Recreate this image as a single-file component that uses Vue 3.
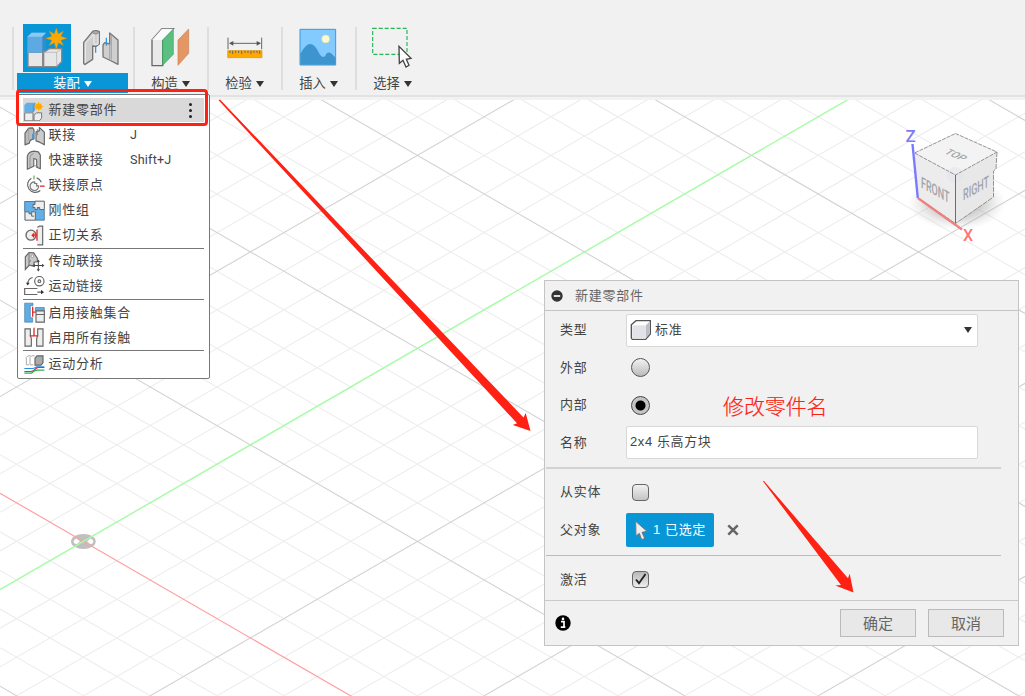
<script setup>
const minor = []
for (let n = -26; n <= 26; n++) minor.push({ n, d: n * 38.6, major: n % 5 === 0 })

const OX = 83.4
const OY = 541.4
const S = 0.5778
const yAt = (x, d, dir) => OY + d + dir * S * (x - OX)

const groups = [
  [
    { icon: 'new', box: '42 28.5 63 63', label: '新建零部件', active: true },
    { icon: 'joint', box: '42 103.5 63 63', label: '联接', key: 'J' },
    { icon: 'quick', box: '42 178.5 63 63', label: '快速联接', key: 'Shift+J' },
    { icon: 'origin', box: '42 253.5 63 63', label: '联接原点' },
    { icon: 'rigid', box: '42 328.5 63 63', label: '刚性组' },
    { icon: 'tangent', box: '42 403.5 63 63', label: '正切关系' },
  ],
  [
    { icon: 'drive', box: '42 48.5 63 63', label: '传动联接' },
    { icon: 'link', box: '42 122.5 63 63', label: '运动链接' },
  ],
  [
    { icon: 'contact', box: '42 201.5 63 63', label: '启用接触集合' },
    { icon: 'allcontact', box: '42 275.5 63 63', label: '启用所有接触' },
  ],
  [{ icon: 'study', box: '42 355.5 63 63', label: '运动分析' }],
]
</script>

<template>
  <div class="app">
    <svg class="canvas" width="1025" height="696" viewBox="0 0 1025 696">
      <defs>
        <radialGradient id="shade">
          <stop offset="0" stop-color="#777" stop-opacity=".75" />
          <stop offset=".6" stop-color="#999" stop-opacity=".35" />
          <stop offset="1" stop-color="#bbb" stop-opacity="0" />
        </radialGradient>
      </defs>
      <g fill="none">
        <template v-for="l in minor" :key="l.n">
          <path v-if="!l.major" :d="`M0 ${yAt(0, l.d, 1)}L1025 ${yAt(1025, l.d, 1)}M0 ${yAt(0, l.d, -1)}L1025 ${yAt(1025, l.d, -1)}`" stroke="#ededed" stroke-width="1.100" />
        </template>
        <template v-for="l in minor" :key="'m' + l.n">
          <path v-if="l.major && l.n !== 0" :d="`M0 ${yAt(0, l.d, 1)}L1025 ${yAt(1025, l.d, 1)}M0 ${yAt(0, l.d, -1)}L1025 ${yAt(1025, l.d, -1)}`" stroke="#d2d2d2" stroke-width="1.100" />
        </template>
        <ellipse cx="83.4" cy="541.4" rx="12.3" ry="7.5" fill="#bfbfbf" />
        <path d="M80 541.4L76.5 538.5Q73.5 539.5 73.5 541.4T76.5 544.3ZM87 541.4L90.500 538.500Q93.400 539.500 93.400 541.400T90.500 544.300Z" fill="#fff" />
        <path :d="`M0 ${yAt(0, 0, 1)}L1025 ${yAt(1025, 0, 1)}`" stroke="#ffa0a0" stroke-width="1.2" />
        <path :d="`M0 ${yAt(0, 0, -1)}L1025 ${yAt(1025, 0, -1)}`" stroke="#a6fba6" stroke-width="1.4" />
      </g>
      <g class="cube-text">
        <ellipse cx="957" cy="203" rx="49" ry="27" fill="url(#shade)" />
        <path d="M955.500 133.500L997 152L955.500 175L914.500 153Z" fill="#f3f3f4" />
        <path d="M914.500 153L955.500 175V223.500L918 198Z" fill="#ececed" />
        <path d="M997 152L955.500 175V223.500L993 197V171L996 169Z" fill="#e8e8e9" />
        <circle cx="955" cy="175" r="8" fill="#dfe3e9" opacity=".5" />
        <g fill="none" stroke="#888" stroke-width=".9">
          <path d="M955.500 133.500L997 152L955.500 175L914.500 153Z" stroke-dasharray="4 1" />
          <path d="M997 152L996 169L993.500 171V197L955.500 223.500V175" stroke-dasharray="5 1" />
          <path d="M955.500 175V223.500" stroke="#666" />
          <path d="M918 198L955.500 223.500" stroke-dasharray="4 1" />
        </g>
        <path d="M912.500 144L917.800 198" stroke="#7a7aff" stroke-width="2.400" />
        <path d="M917.800 198L962 229.500" stroke="#f07f7f" stroke-width="2.200" />
        <text x="905.500" y="141.500" font-size="17" font-weight="500" fill="#7c7cf5">Z</text>
        <text x="963" y="241" font-size="16" font-weight="500" fill="#ff7474">X</text>
        <g font-weight="500" fill="#a0a4a9">
          <text transform="matrix(.85 .38 -.62 .42 943.500 153)" font-size="14.500" textLength="22" lengthAdjust="spacingAndGlyphs">TOP</text>
          <text transform="matrix(.84 .46 0 1 921 187.500)" font-size="15.500" textLength="34" lengthAdjust="spacingAndGlyphs">FRONT</text>
          <text transform="matrix(.84 -.46 0 1 963 200.500)" font-size="15.500" textLength="31" lengthAdjust="spacingAndGlyphs">RIGHT</text>
        </g>
      </g>
    </svg>

    <svg class="defs" width="0" height="0">
      <defs>
        <g id="new">
          <path d="M44 67H69V91H44ZM72 91V74L80 67H95V83L88 91Z" fill="#eee" stroke="#777" stroke-width="3" />
          <path d="M43 44L50 37H76V58L70 65H43Z" fill="#62aee8" />
          <path d="M70 65V44L76 38" fill="none" stroke="#4788bd" stroke-width="2" />
          <path d="M86 33L89 41L96 38L93 45L101 48L93 51L96 58L89 55L86 63L83 55L76 58L79 51L71 48L79 45L76 38L83 41Z" fill="#ffa800" />
        </g>
        <g id="joint">
          <path d="M45 163V128L56 113L68 112L72 118V145L61 149L58 158Z" fill="#bbb" stroke="#666" stroke-width="3.500" stroke-linejoin="round" />
          <path d="M78 151V124L88 121V111L103 125V163L89 155Z" fill="#ccc" stroke="#666" stroke-width="3.500" stroke-linejoin="round" />
          <path d="M68 130V148M82 116V134" stroke="#3795dc" stroke-width="3" />
          <path d="M56 113V150" stroke="#999" stroke-width="2" />
        </g>
        <g id="quick">
          <path d="M52 236V197Q56 183 72 182L85 184L91 194V235L80 230V207L71 204V227Z" fill="#c7c7c7" stroke="#666" stroke-width="3.500" stroke-linejoin="round" />
          <path d="M60 231V200Q62 191 71 189M71 204V225L84 228" fill="none" stroke="#888" stroke-width="2.500" />
        </g>
        <g id="origin" fill="none">
          <path d="M64 263A23 23 0 1 0 91 300M80 262A24 24 0 0 1 94 275" stroke="#666" stroke-width="3.500" />
          <path d="M74 274A13 13 0 1 0 86 286H80V279H74Z" stroke="#777" stroke-width="3.500" fill="#f5f5f5" />
          <path d="M72 255V267" stroke="#62aa45" stroke-width="3.500" /><path d="M90 287H104" stroke="#e03030" stroke-width="4" />
        </g>
        <g id="rigid">
          <path d="M44 332H102V389H44Z" fill="#62aee6" />
          <path d="M75 332H103V357H89V351H82V357H75V351H69V342H75ZM45 364H57V370H65V364H76V389H45Z" fill="#eee" stroke="#666" stroke-width="3" />
          <path d="M44 333H75M103 358V389H76M44 364V333" fill="none" stroke="#426f91" stroke-width="2.500" />
          <path d="M65 369V377H72" fill="none" stroke="#666" stroke-width="3" />
        </g>
        <g id="tangent">
          <circle cx="63" cy="434" r="15" fill="#eee" stroke="#666" stroke-width="4" />
          <path d="M82 410L89 407H98V463H82" fill="#eee" stroke="#666" stroke-width="3.500" />
          <path d="M81 417V451M69 434H80" stroke="#e32525" stroke-width="4" /><path d="M73 425L64 434L73 443Z" fill="#e32525" />
        </g>
        <g id="drive">
          <path d="M46 104V66L57 53L71 54L82 70V81L72 82V94L58 91Z" fill="#c8c8c8" stroke="#666" stroke-width="3.500" />
          <path d="M57 55V94M62 76L58 82" fill="none" stroke="#777" stroke-width="3" /><circle cx="67" cy="64" r="4" fill="#fff" stroke="#777" stroke-width="2" />
          <path d="M85 79V105M71 92H98" stroke="#444" stroke-width="3" /><path d="M85 74L80 81H90ZM85 110L80 103H90ZM67 92L74 87V97ZM103 92L96 87V97Z" fill="#444" />
        </g>
        <g id="link" fill="none" stroke="#666" stroke-width="3.500">
          <circle cx="88" cy="138" r="14" /><circle cx="88" cy="138" r="4" />
          <path d="M68 127Q54 129 53 148" /><path d="M48 143H59L53 151Z" fill="#333" stroke="none" />
          <path d="M82 160H44V178H82M82 171H95" /><path d="M93 164L102 171L93 177Z" fill="#333" stroke="none" />
        </g>
        <g id="contact">
          <path d="M44 205H69V212H61V249H68V262H44ZM76 218H103V229H76Z" fill="#60ade5" stroke="#447faa" stroke-width="2" />
          <path d="M78 228H103V262H78ZM78 239H103" fill="#eee" stroke="#666" stroke-width="3.500" />
          <path d="M68 216V246M68 232H77" stroke="#e32d2d" stroke-width="4" />
        </g>
        <g id="allcontact">
          <path d="M45 281H61V300L64 310V333H45ZM99 281H83V300L80 310V333H99Z" fill="#eee" stroke="#666" stroke-width="3.500" />
          <path d="M72 278V301M59 302H85" stroke="#e32d2d" stroke-width="4" />
        </g>
        <g id="study">
          <path d="M49 366L54 361H62M49 366V388H57M60 366L65 361H74M60 366V388H70" fill="none" stroke="#aaa" stroke-width="3" />
          <path d="M75 368L81 361H99V382L93 389H75Z" fill="#aaa" stroke="#666" stroke-width="3.500" />
          <path d="M43 399H68Q75 398 79 394H103" fill="none" stroke="#258fe0" stroke-width="3.500" />
          <path d="M43 408H62Q70 408 76 401T88 396H103" fill="none" stroke="#de3030" stroke-width="3.500" />
          <path d="M43 413H65Q72 404 82 404H103" fill="none" stroke="#30a860" stroke-width="3.500" />
        </g>
      </defs>
    </svg>

    <header class="toolbar">
      <section class="tool assemble">
        <div class="icons">
          <span class="picked">
            <svg width="48" height="48" viewBox="69 72 144 144">
              <path d="M84 157H128V200H84ZM131 157L148 146H185V185L170 200H131Z" fill="#e7e7e7" stroke="#888" stroke-width="4" />
              <path d="M170 157V200M131 157H170L184 147" fill="none" stroke="#aaa" stroke-width="2" />
              <path d="M82 110L95 98H138V143L127 158H82Z" fill="#5daae3" />
              <path d="M82 110L95 98H138L127 110Z" fill="#8ac9f5" />
              <path d="M127 110L138 99V143L127 157Z" fill="#3989c7" />
              <path d="M169 85L175 102L190 94L182 109L200 115L182 121L190 136L175 128L169 148L163 128L148 136L156 121L138 115L156 109L148 94L163 102Z" fill="#ffa900" stroke="#d79418" stroke-width="1.500" />
            </svg>
          </span>
          <svg width="42" height="48" viewBox="240 72 126 144">
            <path d="M251 190V127L278 94Q288 90 298 95V132L289 139L278 138V178L254 194Z" fill="#cfcfcf" stroke="#777" stroke-width="4" stroke-linejoin="round" />
            <path d="M256 188V130L282 102V133H294V100" fill="none" stroke="#eee" stroke-width="3" />
            <ellipse cx="287" cy="97" rx="9" ry="5" fill="#aaa" stroke="#777" stroke-width="2" />
            <path d="M309 171V135L314 128L329 132V99L354 120V193L328 180Z" fill="#cfcfcf" stroke="#777" stroke-width="4" stroke-linejoin="round" />
            <path d="M329 132V180M334 107V178" stroke="#999" stroke-width="2.500" />
            <path d="M287 138V158M319 113V137" stroke="#278ddd" stroke-width="3.500" />
          </svg>
        </div>
        <div class="caption"><span>装配</span><i></i></div>
      </section>
      <section class="tool">
        <div class="icons">
          <svg width="48" height="48" viewBox="441 72 144 144">
            <path d="M459 120L489 86H523L491 120V197H459Z" fill="#e9e9e9" stroke="#666" stroke-width="4" />
            <path d="M459 120L489 86H523L491 120Z" fill="#fafafa" />
            <path d="M491 120L523 88V163L491 196Z" fill="#59c080" stroke="#3aa864" stroke-width="2" />
            <path d="M537 120L569 87V160L537 196Z" fill="#e59763" stroke="#cc8350" stroke-width="2" />
          </svg>
        </div>
        <div class="caption"><span>构造</span><i></i></div>
      </section>
      <section class="tool">
        <div class="icons">
          <svg width="48" height="48" viewBox="30 72 144 144">
            <path d="M54 113V148M155 113V148M60 130H150" stroke="#666" stroke-width="3" />
            <path d="M57 130L70 123V137ZM153 130L140 123V137Z" fill="#555" />
            <path d="M53 152H156V173H53Z" fill="#ffa900" stroke="#e29200" stroke-width="2" />
            <path d="M60 152V159M68 152V162M77 152V159M86 152V159M95 152V162M105 152V159M114 152V159M123 152V162M132 152V159M141 152V159M149 152V162" stroke="#666" stroke-width="3" />
          </svg>
        </div>
        <div class="caption"><span>检验</span><i></i></div>
      </section>
      <section class="tool">
        <div class="icons">
          <svg width="48" height="48" viewBox="252 72 144 144">
            <path d="M270 88H377V195H270Z" fill="#83cbff" />
            <path d="M271 161Q300 107 324 153Q339 185 350 160Q359 151 376 173V194H271Z" fill="#3e94cf" />
            <path d="M270 88H377V195H270Z" fill="none" stroke="#3d98d4" stroke-width="3" />
            <circle cx="347" cy="117" r="12" fill="#fff9ce" stroke="#cbd6ae" stroke-width="1.500" />
          </svg>
        </div>
        <div class="caption"><span>插入</span><i></i></div>
      </section>
      <section class="tool last">
        <div class="icons">
          <svg width="48" height="48" viewBox="474 72 144 144">
            <path d="M488 85H591V163H488Z" fill="none" stroke="#26b758" stroke-width="3.500" stroke-dasharray="12 6" />
            <path d="M567 139L568 190L579 181L588 201L597 196L589 178L603 175Z" fill="#fff" stroke="#444" stroke-width="4" />
          </svg>
        </div>
        <div class="caption"><span>选择</span><i></i></div>
      </section>
    </header>

    <nav class="menu">
      <div v-for="(g, gi) in groups" :key="gi" class="group">
        <div v-for="it in g" :key="it.icon" class="item" :class="{ active: it.active }">
          <svg width="21" height="21" :viewBox="it.box"><use :href="'#' + it.icon" /></svg>
          <span class="name">{{ it.label }}</span>
          <span v-if="it.key" class="key">{{ it.key }}</span>
          <span v-if="it.active" class="dots"><b></b><b></b><b></b></span>
        </div>
      </div>
    </nav>

    <section class="dialog">
      <div class="head">
        <svg width="12" height="12" viewBox="0 0 12 12"><circle cx="6" cy="6" r="5.700" fill="#333" /><path d="M2.800 6H9.200" stroke="#fff" stroke-width="1.700" /></svg>
        <span>新建零部件</span>
      </div>
      <div class="row r38">
        <label>类型</label>
        <div class="select">
          <svg width="22" height="22" viewBox="268 132 66 66">
            <path d="M272 149L286 137H329V177L315 193H275L272 189Z" fill="#fff" stroke="#555" stroke-width="4" />
            <path d="M275 151H314V191H275Z" fill="#e1e3e8" /><path d="M315 151L327 140V176L315 190Z" fill="#bcc0c6" />
          </svg>
          <span>标准</span><i></i>
        </div>
      </div>
      <div class="row"><label>外部</label><span class="radio"></span></div>
      <div class="row r38"><label>内部</label><span class="radio on"></span></div>
      <div class="row"><label>名称</label><div class="input">2x4 乐高方块</div></div>
      <div class="rule thick"></div>
      <div class="row r38"><label>从实体</label><span class="check"></span></div>
      <div class="row r38">
        <label>父对象</label>
        <div class="chip">
          <svg width="13" height="21" viewBox="284 178 39 63"><path d="M286 182L287 226L297 218L304 237L313 233L305 215L320 212Z" fill="#eee" stroke="#777" stroke-width="3" /></svg>
          <span>1 已选定</span>
        </div>
        <svg class="clear" width="12" height="12" viewBox="0 0 12 12"><path d="M1.300 1.300L10.700 10.700M10.700 1.300L1.300 10.700" stroke="#666" stroke-width="2.500" /></svg>
      </div>
      <div class="rule"></div>
      <div class="row"><label>激活</label><span class="check ticked"><svg width="17" height="16" viewBox="0 0 17 16"><path d="M4 8.500L7 12.200L13.500 3" fill="none" stroke="#222" stroke-width="1.900" /></svg></span></div>
      <div class="foot">
        <svg width="16" height="16" viewBox="0 0 16 16"><circle cx="8" cy="8" r="7.700" /><path d="M6 6.700H9V12M5.800 12.200H10.300" fill="none" stroke="#fff" stroke-width="1.700" /><circle cx="8" cy="3.900" r="1.300" fill="#fff" /></svg>
        <button>确定</button><button>取消</button>
      </div>
    </section>

    <div class="note">修改零件名</div>
    <div class="frame"></div>
    <svg class="canvas" width="1025" height="696" viewBox="0 0 1025 696" fill="#ff2113">
      <path d="M218.600 100.200L220 99.500L523.500 417.500L525.700 413L530.500 431L512.800 425L517 423.300Z" />
      <path d="M762.800 481L764 481L848 578.300L849.700 573.700L853.500 592.500L835.300 585.500L841 585Z" />
    </svg>
  </div>
</template>

<style>
html, body { margin: 0; overflow: hidden; }
</style>

<style scoped>
.app { position: relative; width: 1025px; height: 696px; overflow: hidden; background: #fff; color: #444; font: 13px/18px "Liberation Sans", "Noto Sans CJK SC", sans-serif; }
.canvas { position: absolute; left: 0; top: 0; pointer-events: none; }
.cube-text { font-family: Roboto, sans-serif; }
.defs { position: absolute; }
svg { display: block; flex: none; }
.toolbar { position: relative; box-sizing: border-box; height: 100px; padding: 24px 0 0 12px; display: flex; background: linear-gradient(#f1f1f1 95px, #e2e2e2 95px, #e2e2e2 97px, #f2f2f2 97px); }
.tool { width: 74px; height: 69px; display: flex; flex-direction: column; align-items: center; gap: 1px; background: linear-gradient(#dedede, #dedede) 0 3px / 2px 63px no-repeat; }
.icons { display: flex; height: 48px; }
.assemble { width: 121px; }
.assemble .icons { align-self: flex-start; gap: 9px; padding-left: 11px; }
.picked { background: #0896d7; }
.caption { box-sizing: border-box; height: 20px; padding: 1px 0 0 1px; display: flex; align-items: center; justify-content: center; gap: 4px; font-size: 13.300px; }
.caption i, .select i { border: solid transparent; border-width: 6px 4px 0; border-top-color: #333; }
.assemble .caption { align-self: flex-start; margin-left: 5px; padding-left: 0; width: 111px; background: #0896d7; color: #fff; }
.assemble .caption i { border-top-color: #fff; }
.menu { position: absolute; left: 17px; top: 94px; box-sizing: border-box; width: 193px; height: 285px; padding: 2.500px 5px 0; background: #fff; border: 1.500px solid #777; border-radius: 2px; }
.group + .group { border-top: 1px solid #777; padding-top: .4px; }
.item { display: flex; align-items: center; height: 25px; }
.item.active { background: linear-gradient(#d9d9d9, #d9d9d9) 0 0 / 100% 24px no-repeat; }
.item svg { margin-left: 1px; }
.name { width: 81.500px; margin-left: 3.500px; font-size: 13px; letter-spacing: .750px; white-space: nowrap; }
.key { font-family: Roboto, sans-serif; font-size: 12.600px; letter-spacing: .200px; }
.dots { margin-left: auto; margin-right: 12px; display: flex; flex-direction: column; gap: 3px; }
.dots b { width: 3px; height: 3px; border-radius: 50%; background: #222; }
.dialog { position: absolute; left: 544px; top: 280px; box-sizing: border-box; width: 475px; height: 366px; border: 1px solid #c4c4c4; background: #f1f1f1; letter-spacing: .750px; }
.head { height: 29px; border-bottom: 1px solid #c4c4c4; display: flex; align-items: center; padding-left: 6px; gap: 12px; color: #666; }
.row { height: 37px; display: flex; align-items: center; padding-left: 15px; }
.r38 { height: 38px; }
label { width: 66px; flex: none; }
.select, .input { box-sizing: border-box; width: 352px; height: 33px; background: #fff; border: 1.500px solid #d8d8d8; border-radius: 2px; display: flex; align-items: center; }
.select { padding: 0 5px 0 3px; gap: 3px; }
.select i { margin-left: auto; }
.input { padding: 0 0 1px 3px; letter-spacing: .600px; }
.radio { box-sizing: border-box; width: 19px; height: 19px; margin-left: 4.500px; border: 1.500px solid #555; border-radius: 50%; background: linear-gradient(#f2f2f2, #bbb); }
.radio.on { background: radial-gradient(circle, #000 0 4.500px, #c4c4c4 5.500px); border-color: #444; }
.rule { height: 1px; margin: 6px 17px 5px 1px; background: #bbb; }
.rule.thick { height: 2px; margin: 6px 17px 4px 1px; background: #d2d2d2; }
.check { box-sizing: border-box; width: 17px; height: 17px; margin-left: 5.500px; border: 1.500px solid #666; border-radius: 4px; background: linear-gradient(#f1f1f1, #c4c4c4); }
.check svg { margin: -1px; }
.check.ticked { background: linear-gradient(#b7b7b7, #eee); }
.chip { width: 88px; height: 34px; background: #0896d7; color: #fff; border-radius: 2px; display: flex; align-items: center; gap: 5px; box-sizing: border-box; padding-left: 9px; letter-spacing: .600px; white-space: nowrap; }
.clear { margin-left: 13px; }
.foot { margin-top: 2px; height: 44px; border-top: 1px solid #c9c9c9; display: flex; align-items: center; padding: 0 14px 0 10px; gap: 12px; }
.foot svg { margin-right: auto; }
button { box-sizing: border-box; width: 76px; height: 28px; padding: 1px 0 0; border: 1.500px solid #bbb; background: #e8e8e8; color: #666; font: 15px/20px "Liberation Sans", "Noto Sans CJK SC", sans-serif; }
.note { position: absolute; left: 723px; top: 392px; font-size: 20.900px; line-height: 30px; font-weight: 300; -webkit-text-stroke: .200px #ff2113; color: #ff2113; white-space: nowrap; }
.frame { position: absolute; left: 16px; top: 89px; box-sizing: border-box; width: 192px; height: 37px; border: 3px solid #ff2113; border-radius: 4px; }
</style>
